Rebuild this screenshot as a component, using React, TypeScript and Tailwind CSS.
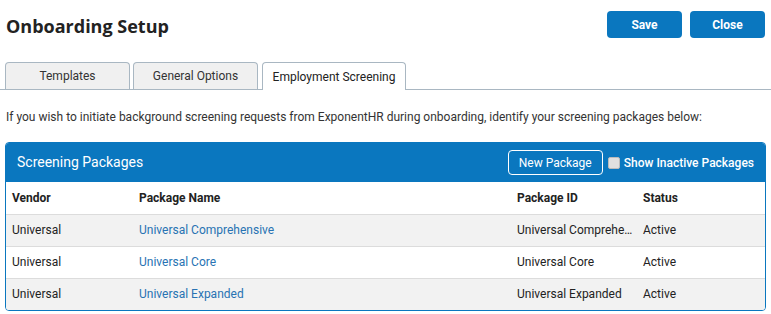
import React, { useState } from "react";

/* ===================== TYPES ===================== */

interface ScreeningPackage {
    vendor: string;
    name: string;
    packageId: string;
    status: string;
}

const packages: ScreeningPackage[] = [
    { vendor: "Universal", name: "Universal Comprehensive", packageId: "Universal Comprehensive", status: "Active" },
    { vendor: "Universal", name: "Universal Core", packageId: "Universal Core", status: "Active" },
    { vendor: "Universal", name: "Universal Expanded", packageId: "Universal Expanded", status: "Active" },
];

const tabs = [
    { label: "Templates", width: "w-[125px]" },
    { label: "General Options", width: "w-[125px]" },
    { label: "Employment Screening", width: "w-[144px]" },
];

/* ===================== COMPONENT ===================== */

const App: React.FC = () => {
    const [activeTab, setActiveTab] = useState("Employment Screening");
    const [showInactive, setShowInactive] = useState(false);

    return (
        <div className="w-[771px] h-[314px] bg-white text-[#333] font-['Roboto',sans-serif] text-[12px] overflow-hidden">
            {/* HEADER */}
            <div className="flex items-start justify-between pl-[6px] pr-[6px] pt-[11px]">
                <h1 className="font-['Open_Sans',sans-serif] font-bold text-[18px] leading-[28px] text-[#222] mt-[1px]">
                    Onboarding Setup
                </h1>
                <div className="flex gap-[8px]">
                    <button className="w-[75px] h-[27px] rounded-[4px] bg-[#0a77bf] text-white font-bold text-[12px]">
                        Save
                    </button>
                    <button className="w-[75px] h-[27px] rounded-[4px] bg-[#0a77bf] text-white font-bold text-[12px]">
                        Close
                    </button>
                </div>
            </div>

            {/* TABS */}
            <div className="mt-[22px] flex items-end gap-[3px] pl-[5px] border-b border-[#a9b7c2] h-[28px]">
                {tabs.map(tab => {
                    const active = tab.label === activeTab;
                    return (
                        <button
                            key={tab.label}
                            onClick={() => setActiveTab(tab.label)}
                            className={
                                active
                                    ? `${tab.width} h-[28px] -mb-px rounded-t-[4px] border border-b-0 border-[#a9b7c2] bg-white text-[12px] text-[#222] ml-[1px]`
                                    : `${tab.width} h-[27px] rounded-t-[4px] border border-b-0 border-[#a9b7c2] bg-[#f0f0f0] text-[12px] text-[#333]`
                            }
                        >
                            {tab.label}
                        </button>
                    );
                })}
            </div>

            <p className="pl-[6px] mt-[19px] leading-[16px] text-[#333]">
                If you wish to initiate background screening requests from ExponentHR during onboarding, identify your screening packages below:
            </p>

            {/* PANEL */}
            <section className="mx-[5px] mt-[17px] rounded-[4px] border border-[#0a77bf] overflow-hidden">
                <div className="bg-[#0a77bf] h-[39px] flex items-center justify-between pl-[11px] pr-[11px]">
                    <h2 className="text-white text-[14px]">Screening Packages</h2>
                    <div className="flex items-center">
                        <button className="h-[25px] w-[95px] rounded-[4px] border border-white text-white text-[12px]">
                            New Package
                        </button>
                        <label className="flex items-center ml-[5px] text-white text-[12px] font-medium cursor-pointer">
                            <span
                                onClick={() => setShowInactive(!showInactive)}
                                className="w-[12px] h-[12px] rounded-[2px] bg-[#e0e0e0] border border-[#bbb] mr-[4px]"
                            />
                            Show Inactive Packages
                        </label>
                    </div>
                </div>

                <table className="w-full table-fixed border-collapse">
                    <colgroup>
                        <col className="w-[127px]" />
                        <col />
                        <col className="w-[126px]" />
                        <col className="w-[128px]" />
                    </colgroup>
                    <thead>
                        <tr className="h-[32px] bg-white">
                            <th className="text-left font-bold pl-[6px] text-[#222]">Vendor</th>
                            <th className="text-left font-bold pl-[6px] text-[#222]">Package Name</th>
                            <th className="text-left font-bold pl-[6px] text-[#222]">Package ID</th>
                            <th className="text-left font-bold pl-[6px] text-[#222]">Status</th>
                        </tr>
                    </thead>
                    <tbody>
                        {packages.map((p, i) => (
                            <tr key={p.name} className={`h-[32px] border-t border-[#dcdcdc] ${i % 2 === 0 ? "bg-[#f2f2f2]" : "bg-white"}`}>
                                <td className="pl-[6px] text-[#222]">{p.vendor}</td>
                                <td className="pl-[6px] text-[#2873b3]">{p.name}</td>
                                <td className="pl-[6px] pr-[4px] text-[#222]">
                                    <div className="truncate">{p.packageId}</div>
                                </td>
                                <td className="pl-[6px] text-[#222]">{p.status}</td>
                            </tr>
                        ))}
                    </tbody>
                </table>
            </section>
        </div>
    );
};

export default App;
